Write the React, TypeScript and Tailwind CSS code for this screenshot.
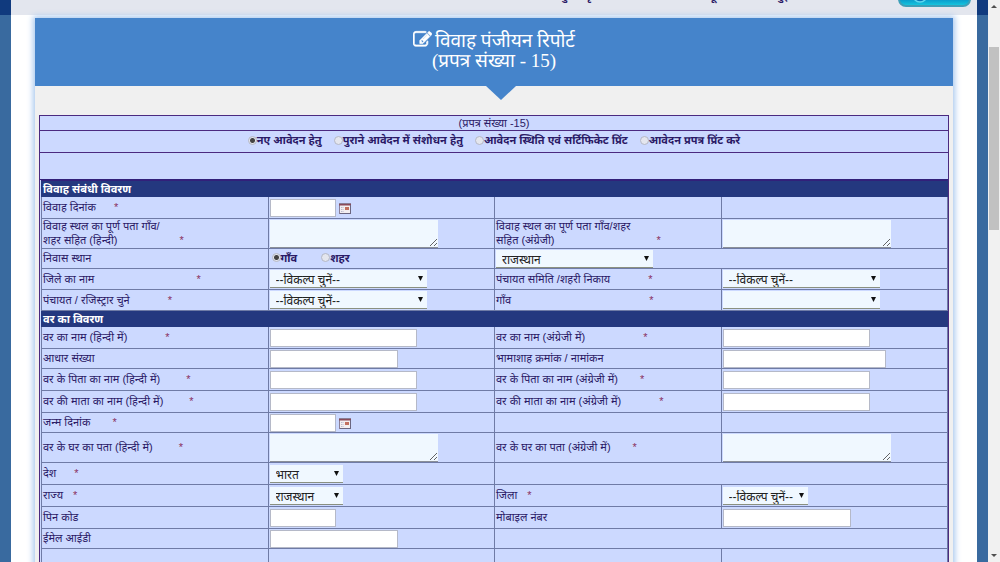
import React from 'react'

interface Control {
  kind: 'text' | 'date' | 'area' | 'select' | 'radios'
  width?: string
  options?: string[]
}

interface Field {
  id: string
  label: React.ReactNode
  star?: string
  control?: Control
}

interface Row {
  height: string
  left?: Field
  right?: Field
  // 'gap' leaves the right half as one cell, 'only' puts a select straight in it
  rightSpan?: 'gap' | 'only'
}

const PICK = '--विकल्प चुनें--'

const marriageRows: Row[] = [
  { height: 'h-[22px]', left: { id: 'mdate', label: 'विवाह दिनांक', star: 'ml-4', control: { kind: 'date' } } },
  {
    height: 'h-[30px]',
    left: { id: 'place-hi', label: <>विवाह स्थल का पूर्ण पता गाँव/<br />शहर सहित (हिन्दी)</>, star: 'ml-15', control: { kind: 'area' } },
    right: { id: 'place-en', label: <>विवाह स्थल का पूर्ण पता गाँव/शहर<br />सहित (अंग्रेजी)</>, star: 'ml-25', control: { kind: 'area' } },
  },
  {
    height: 'h-5',
    left: { id: 'residence', label: 'निवास स्थान', control: { kind: 'radios', options: ['गाँव', 'शहर'] } },
    right: { id: 'state-top', label: 'राज्य', control: { kind: 'select', width: 'w-[157px]', options: ['राजस्थान'] } },
    rightSpan: 'only',
  },
  {
    height: 'h-[21px]',
    left: { id: 'district', label: 'जिले का नाम', star: 'ml-25', control: { kind: 'select', width: 'w-[157px]', options: [PICK] } },
    right: { id: 'samiti', label: 'पंचायत समिति /शहरी निकाय', star: 'ml-9', control: { kind: 'select', width: 'w-[157px]', options: [PICK] } },
  },
  {
    height: 'h-[21px]',
    left: { id: 'registrar', label: 'पंचायत / रजिस्ट्रार चुने', star: 'ml-9', control: { kind: 'select', width: 'w-[157px]', options: [PICK] } },
    right: { id: 'village', label: 'गाँव', star: 'ml-34', control: { kind: 'select', width: 'w-[157px]', options: [''] } },
  },
]

const groomRows: Row[] = [
  {
    height: 'h-[22px]',
    left: { id: 'name-hi', label: 'वर का नाम (हिन्दी में)', star: 'ml-9', control: { kind: 'text', width: 'w-[147px]' } },
    right: { id: 'name-en', label: 'वर का नाम (अंग्रेजी में)', star: 'ml-14', control: { kind: 'text', width: 'w-[147px]' } },
  },
  {
    height: 'h-5',
    left: { id: 'aadhaar', label: 'आधार संख्या', control: { kind: 'text', width: 'w-32' } },
    right: { id: 'bhamashah', label: 'भामाशाह क्रमांक / नामांकन', control: { kind: 'text', width: 'w-[163px]' } },
  },
  {
    height: 'h-[22px]',
    left: { id: 'father-hi', label: 'वर के पिता का नाम (हिन्दी में)', star: 'ml-6', control: { kind: 'text', width: 'w-[147px]' } },
    right: { id: 'father-en', label: 'वर के पिता का नाम (अंग्रेजी में)', star: 'ml-5', control: { kind: 'text', width: 'w-[147px]' } },
  },
  {
    height: 'h-[22px]',
    left: { id: 'mother-hi', label: 'वर की माता का नाम (हिन्दी में)', star: 'ml-6', control: { kind: 'text', width: 'w-[147px]' } },
    right: { id: 'mother-en', label: 'वर की माता का नाम (अंग्रेजी में)', star: 'ml-9', control: { kind: 'text', width: 'w-[147px]' } },
  },
  { height: 'h-5', left: { id: 'dob', label: 'जन्म दिनांक', star: 'ml-5', control: { kind: 'date' } } },
  {
    height: 'h-[30px]',
    left: { id: 'home-hi', label: 'वर के घर का पता (हिन्दी में)', star: 'ml-6', control: { kind: 'area' } },
    right: { id: 'home-en', label: 'वर के घर का पता (अंग्रेजी में)', star: 'ml-5', control: { kind: 'area' } },
  },
  {
    height: 'h-[22px]',
    left: { id: 'country', label: 'देश', star: 'ml-4', control: { kind: 'select', width: 'w-[73px]', options: ['भारत'] } },
    rightSpan: 'gap',
  },
  {
    height: 'h-[22px]',
    left: { id: 'state', label: 'राज्य', star: 'ml-2', control: { kind: 'select', width: 'w-[73px]', options: ['राजस्थान'] } },
    right: { id: 'zila', label: 'जिला', star: 'ml-2', control: { kind: 'select', width: 'w-[85px]', options: [PICK] } },
  },
  {
    height: 'h-[22px]',
    left: { id: 'pin', label: 'पिन कोड', control: { kind: 'text', width: 'w-[66px]' } },
    right: { id: 'mobile', label: 'मोबाइल नंबर', control: { kind: 'text', width: 'w-32' } },
  },
  {
    height: 'h-5',
    left: { id: 'email', label: 'ईमेल आईडी', control: { kind: 'text', width: 'w-32' } },
    rightSpan: 'gap',
  },
  { height: 'h-[22px]' },
]

const modes = ['नए आवेदन हेतु', 'पुराने आवेदन में संशोधन हेतु', 'आवेदन स्थिति एवं सर्टिफिकेट प्रिंट', 'आवेदन प्रपत्र प्रिंट करे']

const RADIO =
  'size-[9px] shrink-0 appearance-none rounded-full border border-[#b4b8c6] bg-[#e4e6ee] checked:bg-[radial-gradient(circle,#444_0_2px,#e4e6ee_3px)]'

const EditIcon = () => (
  <svg viewBox="0 0 1792 1792" fill="currentColor" className="mr-[3px] inline size-[19px] align-[-2px]">
    <path d="M888 1184l116-116-152-152-116 116v56h96v96h56zm440-720q-16-16-33 1l-350 350q-17 17-1 33t33-1l350-350q17-17 1-33zm80 594v190q0 119-84.5 203.5t-203.5 84.5h-832q-119 0-203.5-84.5t-84.5-203.5v-832q0-119 84.5-203.5t203.5-84.5h832q63 0 117 25 15 7 18 23 3 17-9 29l-49 49q-14 14-32 8-23-6-45-6h-832q-66 0-113 47t-47 113v832q0 66 47 113t113 47h832q66 0 113-47t47-113v-126q0-13 9-22l64-64q15-15 35-7t20 29zm-96-738l288 288-672 672h-288v-288zm444 132l-92 92-288-288 92-92q28-28 68-28t68 28l152 152q28 28 28 68t-28 68z" stroke="currentColor" strokeWidth="60" />
  </svg>
)

const CalendarIcon = () => (
  <svg viewBox="0 0 12 11" className="mt-[2px] h-[11px] w-3">
    <rect x="0.5" y="0.5" width="11" height="10" fill="#f3eef0" stroke="#8a7f96" />
    <path d="M0 1h12v1.5H0z" fill="#8a4a5a" />
    <path d="M2 4.5h3M2 6.5h3M2 8.5h3" stroke="#b9b9cc" strokeDasharray="1 .5" />
    <rect x="6" y="4" width="4" height="3" fill="#c2705f" />
    <path d="M11.5 2v9M1 10.5h11" stroke="#6b6680" />
  </svg>
)

const FieldControl: React.FC<{ id: string; control: Control }> = ({ id, control }) => {
  const { kind, width = '', options = [] } = control

  if (kind === 'radios') {
    return (
      <div className="flex items-center gap-6 pb-[2px] pl-[2px] leading-4">
        {options.map((option, i) => (
          <label key={option} className="flex items-center font-bold">
            <input type="radio" name={id} defaultChecked={i === 0} className={RADIO} />
            {option}
          </label>
        ))}
      </div>
    )
  }
  if (kind === 'area') {
    return <textarea id={id} className="block h-7 w-[168px] resize border-b border-[#8a8f98] bg-[#f0f8ff]" />
  }
  if (kind === 'select') {
    return (
      <div className={`relative ${width}`}>
        <select id={id} className="block h-[18px] w-full appearance-none border-b border-[#8a9080] bg-[#f0f8ff] pt-[3px] pl-[6px] text-xs leading-[14px] text-[#222]">
          {options.map((option) => (
            <option key={option}>{option}</option>
          ))}
        </select>
        <svg viewBox="0 0 5 5" className="pointer-events-none absolute top-[6px] right-1 size-[5px]">
          <path d="M0 0h5L2.5 5z" fill="#111" />
        </svg>
      </div>
    )
  }
  if (kind === 'date') {
    return (
      <div className="flex items-center gap-[3px]">
        <input id={id} type="text" className="h-[18px] w-[66px] border border-[#b5b9c8] bg-white" />
        <button type="button" aria-label="calendar">
          <CalendarIcon />
        </button>
      </div>
    )
  }
  return <input id={id} type="text" className={`block h-[18px] border border-[#b5b9c8] bg-white ${width}`} />
}

const CELL = 'border border-[#6f7ba6] py-0 pr-0 pl-[1px] align-middle'

const FieldCells: React.FC<{ field?: Field }> = ({ field }) => (
  <>
    <td className={CELL}>
      {field && (
        <label htmlFor={field.id} className="block pb-[1px] leading-[14px]">
          {field.label}
          {field.star && <span className={`${field.star} pl-[2px] text-[#8a3060]`}>*</span>}
        </label>
      )}
    </td>
    <td className={CELL}>{field?.control && <FieldControl id={field.id} control={field.control} />}</td>
  </>
)

const Section: React.FC<{ title: string; rows: Row[] }> = ({ title, rows }) => (
  <tbody>
    <tr className="h-4">
      <th colSpan={4} className="border border-[#24387f] border-t-[#32207a] bg-[#24387f] p-0 pl-[1px] text-left leading-[14px] font-bold text-white">
        {title}
      </th>
    </tr>
    {rows.map((row, i) => (
      <tr key={i} className={row.height}>
        <FieldCells field={row.left} />
        {row.rightSpan ? (
          <td colSpan={2} className={CELL}>
            {row.right?.control && <FieldControl id={row.right.id} control={row.right.control} />}
          </td>
        ) : (
          <FieldCells field={row.right} />
        )}
      </tr>
    ))}
  </tbody>
)

const App: React.FC = () => {
  return (
    <div className="flex h-screen overflow-hidden bg-[#396a9f] font-['Liberation_Sans','Noto_Sans_Devanagari','Noto_Sans',sans-serif] text-[11px] text-[#2b1a66]">
      <div className="flex flex-1 flex-col overflow-hidden">
        {/* Top menu, scrolled almost out of view */}
        <div className="bg-[#103a7e] px-[11px]">
          <div className="flex h-[15px] items-end justify-end overflow-hidden bg-[#e3e6ee] pr-[6px]">
            <nav className="mb-[9px] flex leading-5 font-bold">
              <a href="#home" className="mr-28">मुख्य पृष्ठ</a>
              <a href="#search" className="mr-13">ढूँढें</a>
              <a href="#feedback" className="mr-24">सुझाव</a>
            </nav>
            <a href="#login" aria-label="login" className="mb-2 flex h-6 w-[73px] items-end rounded-lg border-2 border-[#3d9fb8] bg-linear-to-b from-[#0a86c4] from-60% to-[#16c4dc] px-3">
              <svg viewBox="0 0 16 16" className="mb-[2px] size-4">
                <circle cx="8" cy="8" r="7" fill="#0a72b8" stroke="#5fd8ee" strokeWidth="1.5" />
                <path d="M5 10h6" stroke="#bdf0fa" strokeWidth="1.5" />
              </svg>
            </a>
          </div>
        </div>

        <main className="mx-[11px] flex-1 bg-white px-6 pt-[3px]">
          <div className="h-full bg-[#f0f0f0] shadow-[0_0_6px_2px_#a9c8ee]">
            <header className="relative bg-[#4584cb] pt-3 pb-[15px] text-center text-white">
              <h1 className="font-['Liberation_Serif','Noto_Sans_Devanagari',serif] text-[19px] leading-5">
                <EditIcon />
                विवाह पंजीयन रिपोर्ट
                <br />
                (प्रपत्र संख्या - 15)
              </h1>
              <svg viewBox="0 0 30 14" className="absolute top-full left-1/2 -ml-2 h-[14px] w-[30px]">
                <path d="M0 0h30L15 14z" fill="#4584cb" />
              </svg>
            </header>

            <form className="mx-1 mt-[29px] border border-[#4b2a80] bg-[#ccd9ff]">
              <div className="border-b border-[#4b2a80] text-center leading-[14px]">(प्रपत्र संख्या -15)</div>
              <div className="flex h-[22px] items-center justify-center gap-3 border-b border-[#4b2a80] pb-[2px] font-bold">
                {modes.map((mode, i) => (
                  <label key={mode} className="flex items-center">
                    <input type="radio" name="mode" defaultChecked={i === 0} className={RADIO} />
                    {mode}
                  </label>
                ))}
              </div>
              <div className="h-[27px] border-b border-[#32207a]" />
              <div className="pl-[1px]">
                <table className="w-full table-fixed border-collapse">
                  <Section title="विवाह संबंधी विवरण" rows={marriageRows} />
                  <Section title="वर का विवरण" rows={groomRows} />
                </table>
              </div>
            </form>
          </div>
        </main>
      </div>

      {/* Page scroll bar */}
      <div className="flex w-3 shrink-0 flex-col items-center bg-[#f1f1f1]">
        <svg viewBox="0 0 12 12" className="size-3">
          <path d="M3 8l3-3 3 3z" fill="#505050" />
        </svg>
        <div className="mt-[35px] h-[183px] w-[10px] bg-[#c1c1c1]" />
        <svg viewBox="0 0 12 12" className="mt-auto size-3">
          <path d="M3 4l3 3 3-3z" fill="#505050" />
        </svg>
      </div>
    </div>
  )
}

export default App
